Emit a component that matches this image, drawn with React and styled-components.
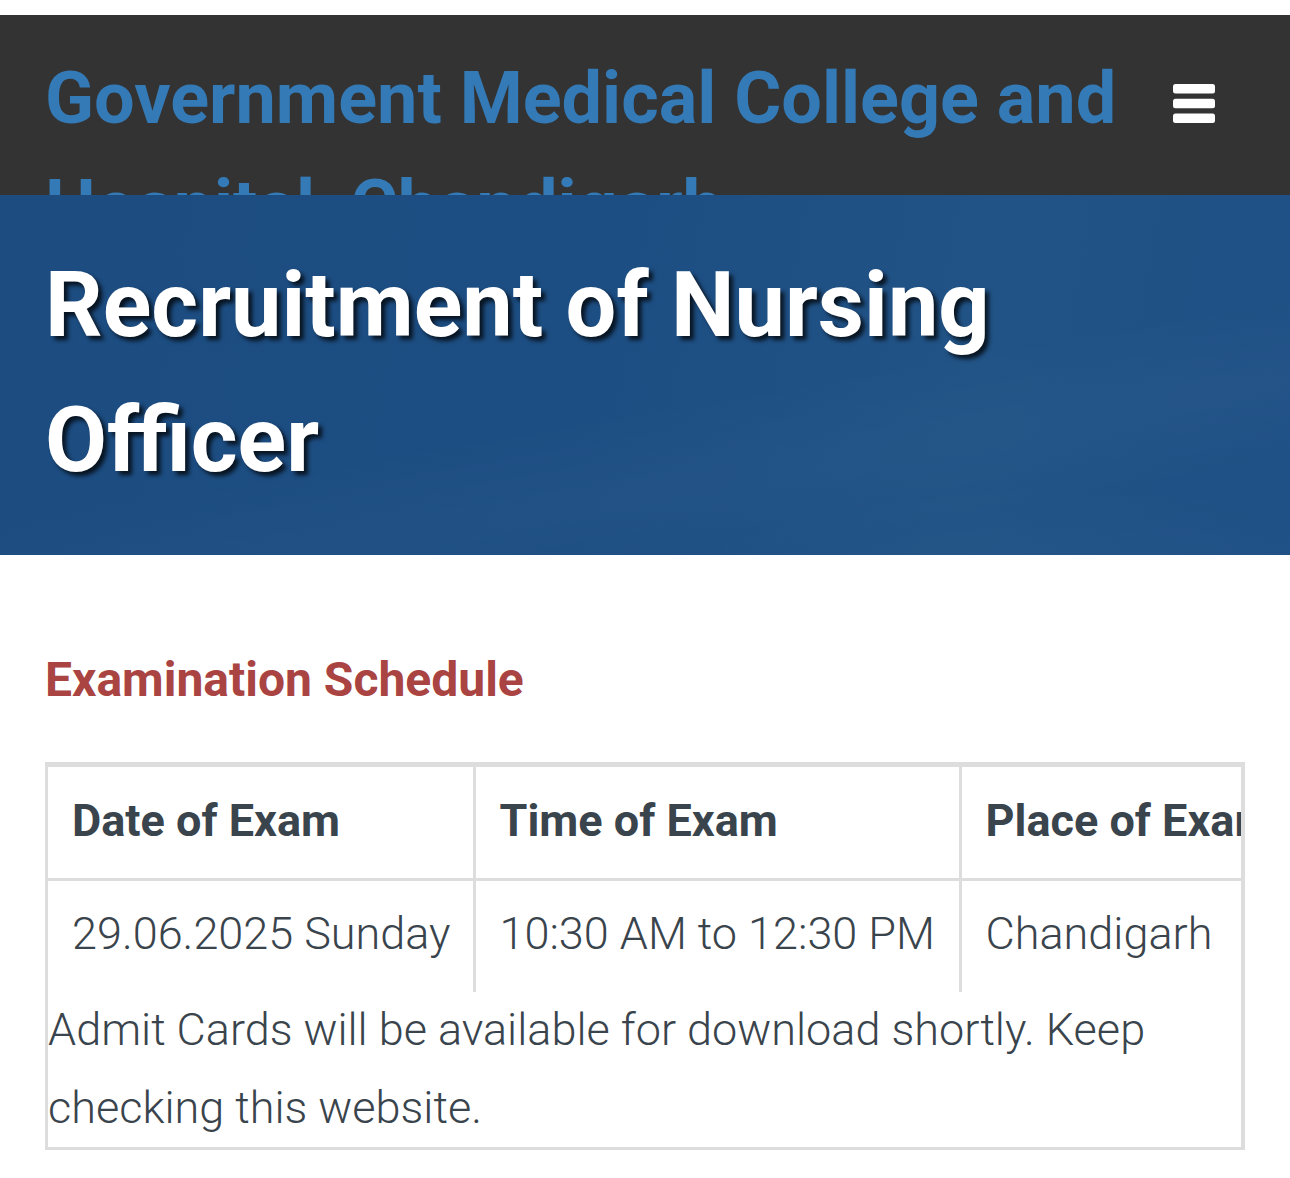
import React from "react";
import styled, { createGlobalStyle } from "styled-components";

const Global = createGlobalStyle`
  html, body { margin: 0; padding: 0; background: #fff; }
  body { font-family: Roboto, "Liberation Sans", sans-serif; color: #3a444c; }
  * { box-sizing: border-box; }
`;
const Page = styled.div`
  padding-top: 15px;
  width: 1290px;
  height: 1178px;
  overflow: hidden;
`;
const TopBar = styled.header`
  height: 180px;
  background: #333333;
  overflow: hidden;
  display: flex;
  justify-content: space-between;
  align-items: flex-start;
  padding: 30px 75px 0 45px;
`;
const Brand = styled.a`
  display: block;
  width: 1090px;
  font-size: 72px;
  font-weight: 700;
  line-height: 108px;
  color: #337ab7;
`;
const MenuIcon = styled.svg`
  flex: none;
  width: 42px;
  height: 39px;
  margin-top: 39px;
  fill: #fff;
`;
const Hero = styled.section`
  height: 360px;
  padding: 43px 45px 0;
  background:
    radial-gradient(ellipse 420px 140px at 1040px 420px, rgba(255,255,255,0.025), transparent),
    linear-gradient(170deg, transparent 55%, rgba(255,255,255,0.02) 70%, transparent 85%),
    linear-gradient(100deg, #1c4c80 0%, #1d4e83 45%, #215386 75%, #1f5086 100%);
`;
const HeroTitle = styled.h1`
  margin: 0;
  width: 1100px;
  font-size: 90px;
  font-weight: 700;
  line-height: 135px;
  color: #fff;
  text-shadow: 4px 4px 4px rgba(0, 0, 0, 0.75);
`;
const Content = styled.main`
  padding: 97px 45px 0;
`;
const SectionTitle = styled.h2`
  margin: 0 0 54px;
  font-size: 48px;
  font-weight: 700;
  line-height: 56px;
  color: #a94442;
`;
const Box = styled.div`
  width: 1200px;
  height: 388px;
  overflow: hidden;
  border: 3px solid #dddddd;
  border-top-width: 5px;
  border-right-width: 4px;
`;
const Table = styled.table`
  table-layout: fixed;
  width: 1257px;
  border-collapse: collapse;
  font-size: 45px;
`;
const Head = styled.th`
  width: ${(p) => p.$w}px;
  height: 112px;
  padding: 0 0 3px 24px;
  text-align: left;
  font-weight: 700;
  white-space: nowrap;
  overflow: hidden;
  border-right: 3px solid #dddddd;
  border-bottom: 3px solid #dddddd;
`;
const Cell = styled.td`
  height: 113px;
  padding: 0 0 6px 24px;
  font-weight: 300;
  white-space: nowrap;
  border-right: 3px solid #dddddd;
`;
const Note = styled.p`
  margin: -1px 0 0;
  padding: 0;
  width: 1130px;
  font-size: 45px;
  font-weight: 300;
  line-height: 78px;
`;

const rows = [
  ["Date of Exam", 426],
  ["Time of Exam", 486],
  ["Place of Exam", 345],
];
const values = ["29.06.2025 Sunday", "10:30 AM to 12:30 PM", "Chandigarh"];

export default function App() {
  return (
    <Page>
      <Global />
      <TopBar>
        <Brand>Government Medical College and Hospital, Chandigarh</Brand>
        <MenuIcon viewBox="0 0 42 39" aria-label="Menu">
          <rect x="0" y="0" width="42" height="9.5" rx="2.5" />
          <rect x="0" y="14.75" width="42" height="9.5" rx="2.5" />
          <rect x="0" y="29.5" width="42" height="9.5" rx="2.5" />
        </MenuIcon>
      </TopBar>
      <Hero>
        <HeroTitle>Recruitment of Nursing Officer</HeroTitle>
      </Hero>
      <Content>
        <SectionTitle>Examination Schedule</SectionTitle>
        <Box>
          <Table>
            <thead>
              <tr>
                {rows.map(([t, w]) => (
                  <Head key={t} $w={w}>{t}</Head>
                ))}
              </tr>
            </thead>
            <tbody>
              <tr>
                {values.map((v) => (
                  <Cell key={v}>{v}</Cell>
                ))}
              </tr>
            </tbody>
          </Table>
          <Note>Admit Cards will be available for download shortly. Keep checking this website.</Note>
        </Box>
      </Content>
    </Page>
  );
}
